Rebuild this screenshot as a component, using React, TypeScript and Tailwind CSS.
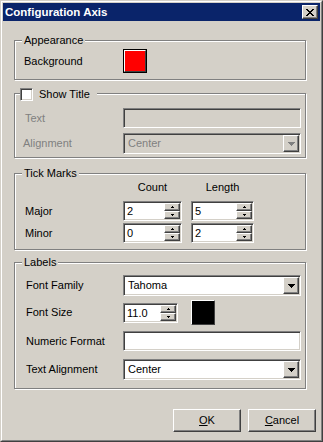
import React from 'react';

const sunken =
  'border border-t-[#808080] border-l-[#808080] border-r-white border-b-white shadow-[inset_1px_1px_0_#404040,inset_-1px_-1px_0_#d4d0c8]';
const raised =
  'border border-t-white border-l-white border-r-[#404040] border-b-[#404040] shadow-[inset_-1px_-1px_0_#808080]';

function DownArrow({ color = '#000' }: { color?: string }) {
  return (
    <svg width="7" height="4" viewBox="0 0 7 4" shapeRendering="crispEdges">
      <path d="M0 0h7v1h-1v1h-1v1h-1v1h-1v-1h-1v-1h-1v-1h-1z" fill={color} />
    </svg>
  );
}

function SpinArrow({ up }: { up?: boolean }) {
  return (
    <svg width="3" height="2" viewBox="0 0 3 2" shapeRendering="crispEdges">
      <path d={up ? 'M1 0h1v1h1v1h-3v-1h1z' : 'M0 0h3v1h-1v1h-1v-1h-1z'} fill="#000" />
    </svg>
  );
}

function Group({ legend, className, children }: { legend: React.ReactNode; className: string; children: React.ReactNode }) {
  return (
    <div className={`w-[292px] border border-[#808080] shadow-[inset_1px_1px_0_#fff,1px_1px_0_#fff] ${className}`}>
      {legend}
      {children}
    </div>
  );
}

function Legend({ text }: { text: string }) {
  return <div className="-mt-[7px] ml-[7px] w-fit bg-[#d4d0c8] px-[2px] leading-[13px]">{text}</div>;
}

function Row({ label, pad, disabled, className, children }: { label: string; pad: string; disabled?: boolean; className: string; children: React.ReactNode }) {
  return (
    <div className={`flex items-center ${className}`}>
      <div className={`w-[108px] leading-[13px] ${pad} ${disabled ? 'text-[#808080]' : ''}`}>{label}</div>
      {children}
    </div>
  );
}

function Combo({ value, disabled }: { value: string; disabled?: boolean }) {
  return (
    <div className={`${sunken} flex h-[21px] w-[178px] items-center p-px ${disabled ? 'bg-[#d4d0c8]' : 'bg-white'}`}>
      <span className={`flex-1 pl-[3px] leading-[13px] ${disabled ? 'text-[#808080]' : ''}`}>{value}</span>
      <div className={`${raised} flex h-[17px] w-[16px] items-center justify-center bg-[#d4d0c8]`}>
        <DownArrow color={disabled ? '#808080' : '#000'} />
      </div>
    </div>
  );
}

function TextField({ value, disabled }: { value?: string; disabled?: boolean }) {
  return (
    <div className={`${sunken} h-[20px] w-[178px] pl-[3px] leading-[16px] ${disabled ? 'bg-[#d4d0c8]' : 'bg-white'}`}>{value}</div>
  );
}

function Spin({ value, width }: { value: string; width: string }) {
  return (
    <div className={`${sunken} flex h-[20px] ${width} bg-white p-px`}>
      <span className="flex-1 pl-[2px] leading-[16px]">{value}</span>
      <div className="flex w-[16px] flex-col">
        <div className={`${raised} flex h-[8px] items-center justify-center bg-[#d4d0c8]`}>
          <SpinArrow up />
        </div>
        <div className={`${raised} flex h-[8px] items-center justify-center bg-[#d4d0c8]`}>
          <SpinArrow />
        </div>
      </div>
    </div>
  );
}

function Button({ mnemonic, rest }: { mnemonic: string; rest: string }) {
  return (
    <div className={`${raised} flex h-[23px] w-[68px] items-center justify-center bg-[#d4d0c8] leading-[13px]`}>
      <span>
        <span className="underline">{mnemonic}</span>
        {rest}
      </span>
    </div>
  );
}

export default function App() {
  return (
    <div className="h-[442px] w-[323px] bg-[#d4d0c8] font-['Liberation_Sans',Arial,sans-serif] text-[11px] text-black">
      <div className="h-full border border-t-[#d4d0c8] border-l-[#d4d0c8] border-r-[#404040] border-b-[#404040]">
        <div className="flex h-full flex-col border border-t-white border-l-white border-r-[#808080] border-b-[#808080] p-px">
          {/* title bar */}
          <div className="flex h-[18px] items-center justify-between bg-[#0a246a] pl-[2px] pr-[2px]">
            <span className="text-[11.5px] font-bold leading-[14px] text-white">Configuration Axis</span>
            <div className={`${raised} flex h-[14px] w-[16px] items-center justify-center bg-[#d4d0c8]`}>
              <svg width="8" height="7" viewBox="0 0 8 7" shapeRendering="crispEdges">
                <path
                  d="M0 0h2v1h-2zM6 0h2v1h-2zM1 1h2v1h-2zM5 1h2v1h-2zM2 2h4v1h-4zM3 3h2v1h-2zM2 4h4v1h-4zM1 5h2v1h-2zM5 5h2v1h-2zM0 6h2v1h-2zM6 6h2v1h-2z"
                  fill="#000"
                />
              </svg>
            </div>
          </div>

          <div className="flex flex-1 flex-col pl-[11px] pt-[19px]">
            <Group legend={<Legend text="Appearance" />} className="pb-[6px]">
              <Row label="Background" pad="pl-[9px]" className="mt-[2px]">
                <div className="h-[24px] w-[24px] border border-black">
                  <div className="h-full w-full border border-t-white border-l-white border-r-[#404040] border-b-[#404040] bg-[#ff0000]" />
                </div>
              </Row>
            </Group>

            <Group
              className="mt-[13px] pb-[3px]"
              legend={
                <div className="-mt-[6px] ml-[5px] flex w-fit items-center gap-[6px] bg-[#d4d0c8] pr-[7px] leading-[13px]">
                  <div className={`${sunken} h-[13px] w-[13px] bg-white`} />
                  <span>Show Title</span>
                </div>
              }
            >
              <Row label="Text" pad="pl-[10px]" disabled className="mt-[7px]">
                <TextField disabled />
              </Row>
              <Row label="Alignment" pad="pl-[8px]" disabled className="mt-[5px]">
                <Combo value="Center" disabled />
              </Row>
            </Group>

            <Group legend={<Legend text="Tick Marks" />} className="mt-[15px] pb-[6px]">
              <div className="mt-px flex leading-[13px]">
                <div className="w-[108px]" />
                <div className="w-[59px] text-center">Count</div>
                <div className="ml-[9px] w-[63px] text-center">Length</div>
              </div>
              <Row label="Major" pad="pl-[10px]" className="mt-[7px]">
                <Spin value="2" width="w-[59px]" />
                <div className="ml-[9px]">
                  <Spin value="5" width="w-[63px]" />
                </div>
              </Row>
              <Row label="Minor" pad="pl-[10px]" className="mt-[2px]">
                <Spin value="0" width="w-[59px]" />
                <div className="ml-[9px]">
                  <Spin value="2" width="w-[63px]" />
                </div>
              </Row>
            </Group>

            <Group legend={<Legend text="Labels" />} className="mt-[12px] pb-[8px]">
              <Row label="Font Family" pad="pl-[11px]" className="mt-[6px]">
                <Combo value="Tahoma" />
              </Row>
              <Row label="Font Size" pad="pl-[11px]" className="mt-[4px]">
                <Spin value="11.0" width="w-[55px]" />
                <div className="ml-[13px] h-[25px] w-[24px] border border-t-white border-l-white border-r-[#404040] border-b-[#404040] bg-black" />
              </Row>
              <Row label="Numeric Format" pad="pl-[11px]" className="mt-[6px]">
                <TextField />
              </Row>
              <Row label="Text Alignment" pad="pl-[11px]" className="mt-[8px]">
                <Combo value="Center" />
              </Row>
            </Group>

            <div className="mt-[20px] flex justify-end gap-[7px] pr-[4px]">
              <Button mnemonic="O" rest="K" />
              <Button mnemonic="C" rest="ancel" />
            </div>
          </div>
        </div>
      </div>
    </div>
  );
}
